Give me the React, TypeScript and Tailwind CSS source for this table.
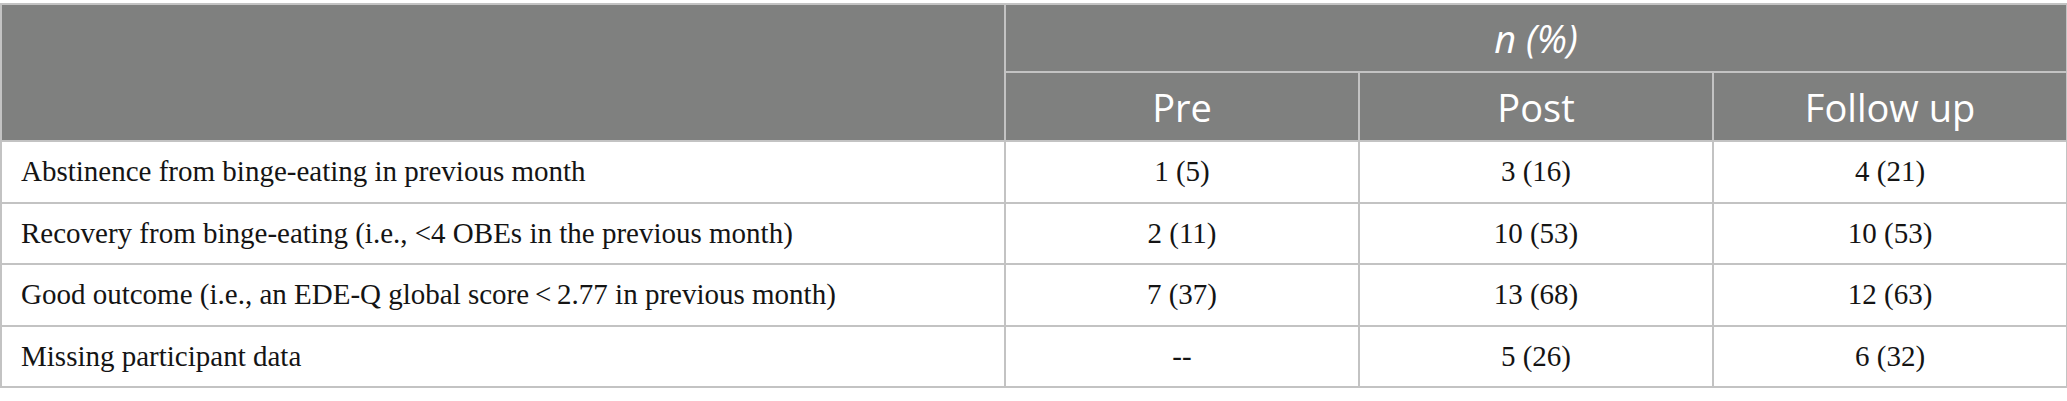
const rows = [
  { label: "Abstinence from binge-eating in previous month", pre: "1 (5)", post: "3 (16)", follow: "4 (21)" },
  { label: "Recovery from binge-eating (i.e., <4 OBEs in the previous month)", pre: "2 (11)", post: "10 (53)", follow: "10 (53)" },
  { label: "Good outcome (i.e., an EDE-Q global score\u2009<\u20092.77 in previous month)", pre: "7 (37)", post: "13 (68)", follow: "12 (63)" },
  { label: "Missing participant data", pre: "--", post: "5 (26)", follow: "6 (32)" },
];

const heights = ["h-[62px]", "h-[61px]", "h-[62px]", "h-[61px]"];

export default function App() {
  return (
    <div className="w-[2067px] h-[401px] bg-white pt-[3px]">
      <table className="w-[2066px] border-collapse table-fixed">
        <colgroup>
          <col className="w-[1004px]" />
          <col className="w-[354px]" />
          <col className="w-[354px]" />
          <col className="w-[354px]" />
        </colgroup>
        <thead className="bg-[#7f807f] text-white font-['Open_Sans',sans-serif] text-[38px] leading-none">
          <tr className="h-[68px]">
            <th rowSpan={2} className="border-2 border-[#c3c3c3]" />
            <th colSpan={3} className="border-2 border-[#c3c3c3] font-normal italic text-center">
              n (%)
            </th>
          </tr>
          <tr className="h-[69px]">
            <th className="border-2 border-[#c3c3c3] font-normal text-center">Pre</th>
            <th className="border-2 border-[#c3c3c3] font-normal text-center">Post</th>
            <th className="border-2 border-[#c3c3c3] font-normal text-center">Follow up</th>
          </tr>
        </thead>
        <tbody className="font-['Liberation_Serif',serif] text-[29px] text-[#141414]">
          {rows.map((r, i) => (
            <tr key={i} className={heights[i]}>
              <td className="border-2 border-[#c3c3c3] pl-[19px] whitespace-nowrap">{r.label}</td>
              <td className="border-2 border-[#c3c3c3] text-center">{r.pre}</td>
              <td className="border-2 border-[#c3c3c3] text-center">{r.post}</td>
              <td className="border-2 border-[#c3c3c3] text-center">{r.follow}</td>
            </tr>
          ))}
        </tbody>
      </table>
    </div>
  );
}
